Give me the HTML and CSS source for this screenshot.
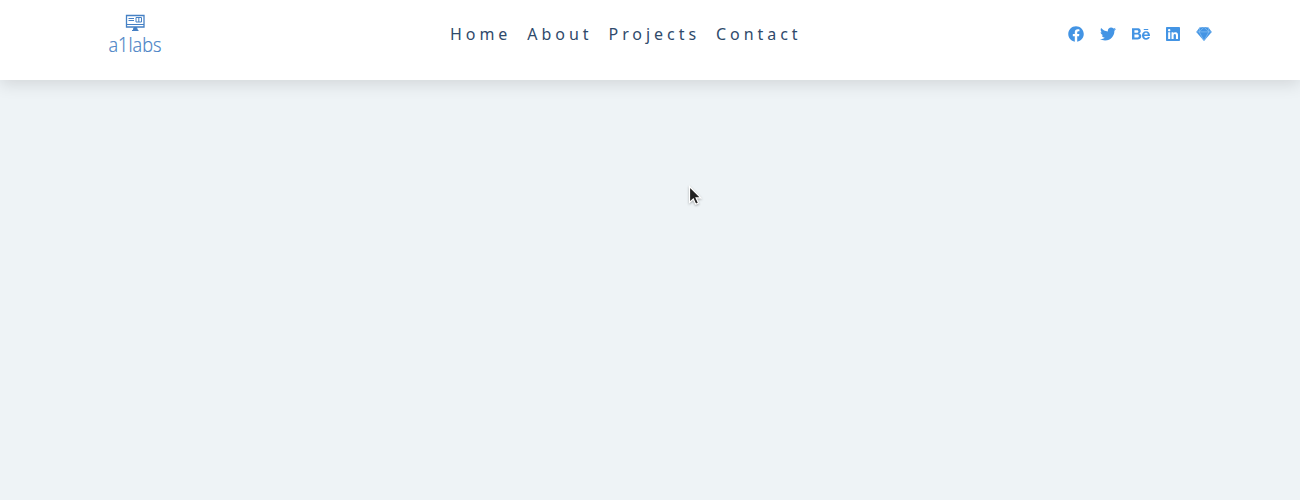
FILE: index.html
```html
<!DOCTYPE html>
<html lang="en">
<head>
<meta charset="utf-8">
<title>a1labs</title>
<link rel="stylesheet" href="styles.css">
</head>
<body>
<header class="navbar">
  <a class="logo" aria-label="a1labs">
    <svg width="60" height="48" viewBox="0 0 60 48">
      <g fill="none" stroke="#4580c4">
        <path d="M18.5 2.5h17.5v11.5H18.5z" stroke-width="1.3"/>
        <path d="M18.5 11.5h17.5M20.5 5.5h5.5M20.5 7.5h5.5M28 4.5h5.5v4.5H28zM30.8 4.5v4.5" stroke-width="1"/>
        <path d="M26 14.5L25.3 17h4l-.7-2.5zM24 17.5h6.5" fill="#4580c4" stroke-width="1"/>
      </g>
      <text class="logo-text" x="0.5" y="38.5" textLength="53" lengthAdjust="spacingAndGlyphs">a1labs</text>
    </svg>
  </a>
  <nav class="menu"><a>Home</a><a>About</a><a>Projects</a><a>Contact</a></nav>
  <div class="social">
    <svg class="icon" viewBox="0 0 512 512"><path d="M504 256C504 119 393 8 256 8S8 119 8 256c0 123.78 90.69 226.38 209.25 245V327.69h-63V256h63v-54.64c0-62.15 37-96.48 93.67-96.48 27.14 0 55.52 4.84 55.52 4.84v61h-31.28c-30.8 0-40.41 19.12-40.41 38.73V256h68.78l-11 71.69h-57.78V501C413.31 482.38 504 379.78 504 256z"/></svg>
    <svg class="icon" viewBox="0 0 512 512"><path d="M459.37 151.716c.325 4.548.325 9.097.325 13.645 0 138.72-105.583 298.558-298.558 298.558-59.452 0-114.68-17.219-161.137-47.106 8.447.974 16.568 1.299 25.34 1.299 49.055 0 94.213-16.568 130.274-44.832-46.132-.975-84.792-31.188-98.112-72.772 6.498.974 12.995 1.624 19.818 1.624 9.421 0 18.843-1.3 27.614-3.573-48.081-9.747-84.143-51.98-84.143-102.985v-1.299c13.969 7.797 30.214 12.67 47.431 13.319-28.264-18.843-46.781-51.005-46.781-87.391 0-19.492 5.197-37.36 14.294-52.954 51.655 63.675 129.3 105.258 216.365 109.807-1.624-7.797-2.599-15.918-2.599-24.04 0-57.828 46.782-104.934 104.934-104.934 30.213 0 57.502 12.67 76.67 33.137 23.715-4.548 46.456-13.32 66.599-25.34-7.798 24.366-24.366 44.833-46.132 57.827 21.117-2.273 41.584-8.122 60.426-16.243-14.292 20.791-32.161 39.308-52.628 54.253z"/></svg>
    <svg class="icon icon-wide" viewBox="0 0 576 512"><path d="M232 237.2c31.8-15.2 48.4-38.2 48.4-74 0-70.6-52.6-87.8-113.3-87.8H0v354.4h171.8c64.4 0 124.9-30.9 124.9-102.9 0-44.5-21.1-77.4-64.7-89.7zM77.9 135.9H151c28.1 0 53.4 7.9 53.4 40.5 0 30.1-19.7 42.2-47.5 42.2h-79v-82.7zm83.3 233.7H77.9V272h84.9c34.3 0 56 14.3 56 50.6 0 35.8-25.9 47-57.6 47zm358.5-240.7H376V94h143.7v34.9zM576 305.2c0-75.9-44.4-139.2-124.9-139.2-78.2 0-131.3 58.8-131.3 135.8 0 79.9 50.3 134.7 131.3 134.7 61.3 0 101-27.6 120.1-86.3H509c-6.7 21.9-34.3 33.5-55.7 33.5-41.3 0-63-24.2-63-65.3h185.1c.3-4.2.6-8.7.6-13.2zM390.4 274c2.3-33.7 24.7-54.8 58.5-54.8 35.4 0 53.2 20.8 56.2 54.8H390.4z"/></svg>
    <svg class="icon icon-narrow" viewBox="0 0 448 512"><path d="M416 32H31.9C14.3 32 0 46.5 0 64.3v383.4C0 465.5 14.3 480 31.9 480H416c17.6 0 32-14.5 32-32.3V64.3c0-17.8-14.4-32.3-32-32.3zM135.4 416H69V202.2h66.5V416zm-33.2-243c-21.3 0-38.5-17.3-38.5-38.5S80.9 96 102.2 96c21.2 0 38.5 17.3 38.5 38.5 0 21.3-17.2 38.5-38.5 38.5zm282.1 243h-66.4V312c0-24.8-.5-56.7-34.5-56.7-34.6 0-39.9 27-39.9 54.9V416h-66.4V202.2h63.7v29.2h.9c8.9-16.8 30.6-34.5 62.9-34.5 67.2 0 79.7 44.3 79.7 101.9V416z"/></svg>
    <svg class="icon" viewBox="0 0 512 512"><path d="M256 30L114 45 8 188l248 294 248-294L398 45z"/><path class="facet" d="M114 45L102 188 256 36 410 188 398 45M8 188H504M102 188L256 476 410 188"/></svg>
  </div>
</header>
<svg class="cursor" width="16" height="23" viewBox="0 0 16 23"><path d="M1.5 1.5v16l3.8-3.5 2.4 5.2 2.8-1.2-2.4-5.1h4.7z"/></svg>
</body>
</html>
```
FILE: styles.css
```css
body {
  margin: 0;
  min-height: 500px;
  background: #eef3f6;
  font-family: "Noto Sans", "Open Sans", sans-serif;
}
.navbar {
  box-sizing: border-box;
  height: 80px;
  padding: 13px 88px 0 108px;
  display: grid;
  grid-template-columns: 342px 1fr auto;
  align-items: start;
  background: #fff;
  box-shadow: 0 4px 16px rgba(0, 0, 0, .12);
}
.logo, .logo svg { display: block; }
.logo-text {
  font: 300 20px "Open Sans", sans-serif;
  fill: #4580c4;
  stroke: #4580c4;
  stroke-width: .2;
}
.menu {
  display: flex;
  gap: 16px;
  padding-top: 10px;
  color: #2f4a6b;
  font-size: 16px;
  line-height: 22px;
  letter-spacing: 3.95px;
}
.social {
  display: flex;
  gap: 16px;
  padding-top: 13px;
}
.icon { width: 16px; height: 16px; fill: #4394e4; }
.icon-wide { width: 18px; }
.icon-narrow { width: 14px; }
.facet { fill: none; stroke: #8fc3f3; stroke-width: 20; }
.cursor {
  position: absolute;
  left: 688px;
  top: 185px;
  fill: #222;
  stroke: #fff;
  stroke-width: 1.2;
  filter: drop-shadow(0 1px 1px rgba(0, 0, 0, .3));
}
```
